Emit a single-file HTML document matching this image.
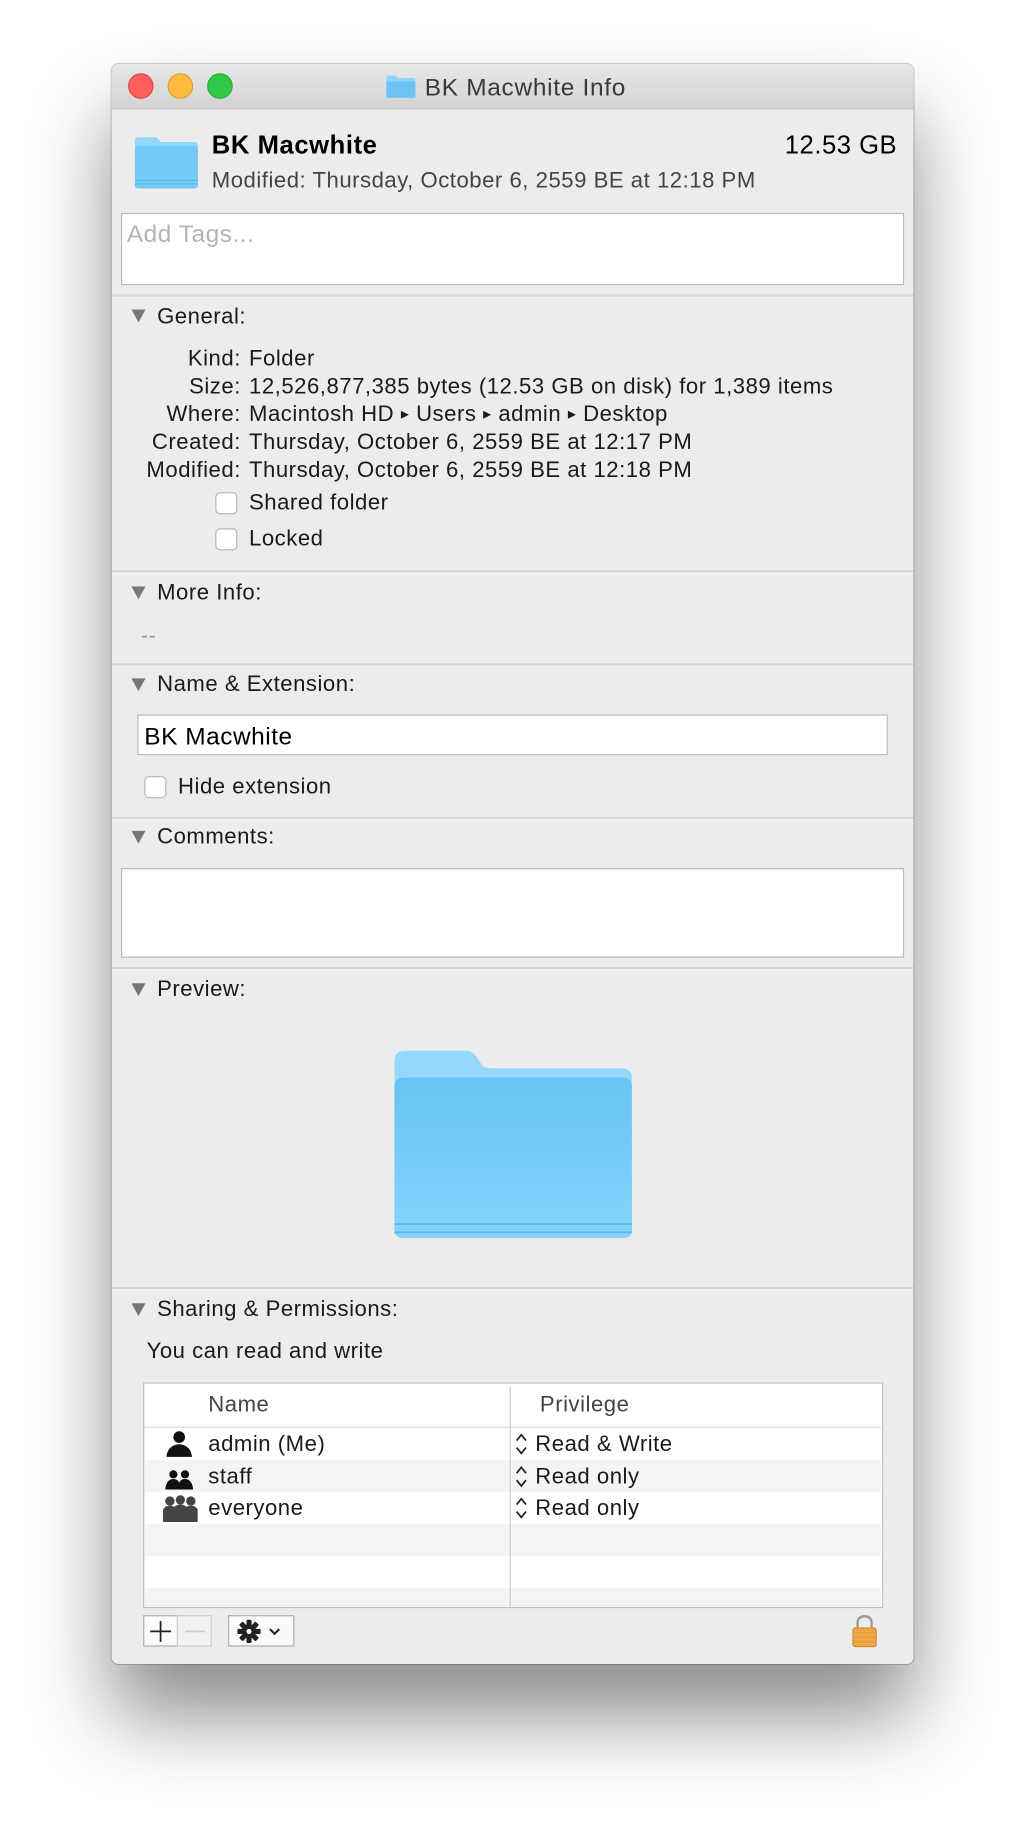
<!DOCTYPE html>
<html><head><meta charset="utf-8"><style>
html,body{margin:0;padding:0;background:#fff;width:1024px;height:1822px;overflow:hidden}
#s{position:absolute;left:0;top:0;width:880px;height:1566px;transform:scale(1.163636);transform-origin:0 0;font-family:"Liberation Sans",sans-serif;color:#1a1a1a;font-size:19px;letter-spacing:.45px}
.a{position:absolute;white-space:nowrap;line-height:1}
.win{position:absolute;left:96px;top:55px;width:689px;height:1375px;background:#ececec;border-radius:6px;box-shadow:0 45px 70px rgba(0,0,0,.45),0 0 0 1px rgba(0,0,0,.18)}
.tb{position:absolute;left:96px;top:55px;width:689px;height:38px;background:linear-gradient(#e8e8e8,#d3d3d3);border-radius:6px 6px 0 0;border-bottom:1px solid #b5b5b5}
.dot{position:absolute;width:22px;height:22px;border-radius:50%;top:63px}
.sep{position:absolute;left:96px;width:689px;height:2px;background:#d6d6d6;border-bottom:1px solid #f8f8f8}
.tri{position:absolute;width:0;height:0;border-left:6px solid transparent;border-right:6px solid transparent;border-top:11px solid #777}
.box{position:absolute;background:#fff;border:1px solid #b8b8b8;box-sizing:border-box}
.cb{position:absolute;width:19px;height:19px;background:#fff;border:1px solid #b5b5b5;border-radius:4px;box-sizing:border-box}
.r{text-align:right}
.row{position:absolute;left:124px;width:633px}
</style></head><body><div id="s">
<div class="win"></div>
<div class="tb"></div>
<div class="dot" style="left:110px;background:#fc605c;border:1px solid #de4a46;box-sizing:border-box"></div>
<div class="dot" style="left:144px;background:#fdbc40;border:1px solid #de9f32;box-sizing:border-box"></div>
<div class="dot" style="left:178px;background:#34c84a;border:1px solid #27aa37;box-sizing:border-box"></div>
<svg class="a" style="left:331px;top:64px" width="27" height="21" viewBox="0 0 27 21"><path d="M1 3 Q1 1 3 1 H9 L11 3 H24 Q26 3 26 5 V20 H1Z" fill="#8fd2fb"/><path d="M1 6 H26 V20 H1Z" fill="#6cc4f5"/></svg>
<div class="a" style="left:365px;top:65px;font-size:21px;letter-spacing:.6px;color:#3a3a3a">BK Macwhite Info</div>

<svg class="a" style="left:115px;top:117px" width="56" height="46" viewBox="0 0 56 46"><path d="M1 4 Q1 1 4 1 H18 Q21 1 23 5 H52 Q55 5 55 8 V44 H1Z" fill="#95d6fc"/><path d="M1 10 Q1 8 4 8 H52 Q55 8 55 11 V42 Q55 45 52 45 H4 Q1 45 1 42Z" fill="#74caf6"/><path d="M1 38 H55 M1 41 H55" stroke="#5fb6e6" stroke-width="1"/></svg>
<div class="a" style="left:182px;top:114px;font-size:22px;font-weight:bold;color:#000;letter-spacing:.5px">BK Macwhite</div>
<div class="a" style="left:600px;width:171px;top:114px;font-size:22px;text-align:right;color:#000">12.53 GB</div>
<div class="a" style="left:182px;top:146px;color:#444">Modified: Thursday, October 6, 2559 BE at 12:18 PM</div>

<div class="box" style="left:104px;top:183px;width:673px;height:62px"></div>
<div class="a" style="left:109px;top:191px;font-size:21px;color:#b4b4b4">Add Tags...</div>
<div class="sep" style="top:253px"></div>

<div class="tri" style="left:113px;top:266px"></div>
<div class="a" style="left:135px;top:263px">General:</div>
<div class="a r" style="left:100px;width:107px;top:299px">Kind:</div><div class="a" style="left:214px;top:299px">Folder</div>
<div class="a r" style="left:100px;width:107px;top:323px">Size:</div><div class="a" style="left:214px;top:323px">12,526,877,385 bytes (12.53 GB on disk) for 1,389 items</div>
<div class="a r" style="left:100px;width:107px;top:347px">Where:</div><div class="a" style="left:214px;top:347px">Macintosh HD <span style="font-size:9px;vertical-align:3px">&#9654;</span> Users <span style="font-size:9px;vertical-align:3px">&#9654;</span> admin <span style="font-size:9px;vertical-align:3px">&#9654;</span> Desktop</div>
<div class="a r" style="left:100px;width:107px;top:371px">Created:</div><div class="a" style="left:214px;top:371px">Thursday, October 6, 2559 BE at 12:17 PM</div>
<div class="a r" style="left:100px;width:107px;top:395px">Modified:</div><div class="a" style="left:214px;top:395px">Thursday, October 6, 2559 BE at 12:18 PM</div>
<div class="cb" style="left:185px;top:423px"></div><div class="a" style="left:214px;top:423px">Shared folder</div>
<div class="cb" style="left:185px;top:454px"></div><div class="a" style="left:214px;top:454px">Locked</div>
<div class="sep" style="top:490px"></div>

<div class="tri" style="left:113px;top:504px"></div>
<div class="a" style="left:135px;top:500px">More Info:</div>
<div class="a" style="left:121px;top:537px;color:#999">--</div>
<div class="sep" style="top:570px"></div>

<div class="tri" style="left:113px;top:583px"></div>
<div class="a" style="left:135px;top:579px">Name &amp; Extension:</div>
<div class="box" style="left:118px;top:614px;width:645px;height:35px"></div>
<div class="a" style="left:124px;top:623px;font-size:21px;color:#000">BK Macwhite</div>
<div class="cb" style="left:124px;top:667px"></div><div class="a" style="left:153px;top:667px">Hide extension</div>
<div class="sep" style="top:702px"></div>

<div class="tri" style="left:113px;top:714px"></div>
<div class="a" style="left:135px;top:710px">Comments:</div>
<div class="box" style="left:104px;top:746px;width:673px;height:77px"></div>
<div class="sep" style="top:831px"></div>

<div class="tri" style="left:113px;top:845px"></div>
<div class="a" style="left:135px;top:841px">Preview:</div>
<svg class="a" style="left:336px;top:900px" width="212" height="168" viewBox="0 0 212 168"><defs><linearGradient id="g" x1="0" y1="0" x2="0" y2="1"><stop offset="0" stop-color="#68c4f4"/><stop offset="1" stop-color="#84d4fb"/></linearGradient></defs><path d="M3 12 Q3 3 12 3 H64 Q70 3 74 9 L78 15 Q80 18 86 18 H198 Q207 18 207 27 V160 H3Z" fill="#96d8fd"/><path d="M3 34 Q3 26 12 26 H199 Q207 26 207 34 V157 Q207 164 199 164 H11 Q3 164 3 157Z" fill="url(#g)"/><path d="M3 152 H207 M3 159 H207" stroke="#5fb6e8" stroke-width="1.5"/><path d="M3 146 H207" stroke="#7ccbf3" stroke-width="1"/></svg>
<div class="sep" style="top:1106px"></div>

<div class="tri" style="left:113px;top:1120px"></div>
<div class="a" style="left:135px;top:1116px">Sharing &amp; Permissions:</div>
<div class="a" style="left:126px;top:1152px">You can read and write</div>

<div class="box" style="left:123px;top:1188px;width:636px;height:194px;border-color:#bdbdbd"></div>
<div class="row" style="top:1226px;height:1px;background:#d8d8d8"></div>
<div class="row" style="top:1255px;height:27px;background:#f4f4f4"></div>
<div class="row" style="top:1310px;height:27px;background:#f4f4f4"></div>
<div class="row" style="top:1365px;height:16px;background:#f4f4f4"></div>
<div class="a" style="left:438px;top:1192px;width:1px;height:189px;background:#c8c8c8"></div>
<div class="a" style="left:179px;top:1198px;color:#444">Name</div>
<div class="a" style="left:464px;top:1198px;color:#444">Privilege</div>

<svg class="a" style="left:141px;top:1229px" width="26" height="24" viewBox="0 0 26 24"><circle cx="13" cy="6" r="5" fill="#111"/><path d="M2 23 Q3 13 13 12 Q23 13 24 23Z" fill="#111"/></svg>
<svg class="a" style="left:140px;top:1259px" width="28" height="22" viewBox="0 0 28 22"><circle cx="9" cy="8" r="3.5" fill="#111"/><circle cx="19" cy="8" r="3.5" fill="#111"/><path d="M2 21 Q3 12 9 12 Q15 12 15 21Z M13 21 Q13 12 19 12 Q25 12 26 21Z" fill="#111"/></svg>
<svg class="a" style="left:140px;top:1284px" width="30" height="24" viewBox="0 0 30 24"><g fill="#444"><circle cx="6" cy="6" r="4"/><circle cx="15" cy="5" r="4"/><circle cx="24" cy="6" r="4"/><path d="M0 24 V14 Q1 10 6 10 Q11 10 12 14 V24Z M9 24 V13 Q10 9 15 9 Q20 9 21 13 V24Z M18 24 V14 Q19 10 24 10 Q29 10 30 14 V24Z"/></g></svg>
<div class="a" style="left:179px;top:1232px">admin (Me)</div>
<div class="a" style="left:179px;top:1260px">staff</div>
<div class="a" style="left:179px;top:1287px">everyone</div>
<svg class="a" style="left:442px;top:1231px" width="12" height="20" viewBox="0 0 12 20"><path d="M2 7 L6 2 L10 7 M2 13 L6 18 L10 13" fill="none" stroke="#222" stroke-width="1.5"/></svg>
<svg class="a" style="left:442px;top:1259px" width="12" height="20" viewBox="0 0 12 20"><path d="M2 7 L6 2 L10 7 M2 13 L6 18 L10 13" fill="none" stroke="#222" stroke-width="1.5"/></svg>
<svg class="a" style="left:442px;top:1286px" width="12" height="20" viewBox="0 0 12 20"><path d="M2 7 L6 2 L10 7 M2 13 L6 18 L10 13" fill="none" stroke="#222" stroke-width="1.5"/></svg>
<div class="a" style="left:460px;top:1232px">Read &amp; Write</div>
<div class="a" style="left:460px;top:1260px">Read only</div>
<div class="a" style="left:460px;top:1287px">Read only</div>

<div class="box" style="left:123px;top:1388px;width:30px;height:27px;border-color:#aaa;background:#fafafa"></div>
<div class="box" style="left:152px;top:1388px;width:30px;height:27px;border-color:#ccc;background:#f2f2f2"></div>
<svg class="a" style="left:123px;top:1388px" width="60" height="27"><path d="M15 5 V23 M6 14 H24" stroke="#222" stroke-width="1.5"/><path d="M36 14 H53" stroke="#ccc" stroke-width="1.5"/></svg>
<div class="box" style="left:196px;top:1388px;width:57px;height:27px;border-color:#aaa;background:#fafafa"></div>
<svg class="a" style="left:203px;top:1391px" width="46" height="22" viewBox="0 0 46 22"><g fill="#222" transform="translate(11 11)"><circle r="6"/><g id="t"><rect x="-2.2" y="-10" width="4.4" height="20" rx="1"/></g><use href="#t" transform="rotate(45)"/><use href="#t" transform="rotate(90)"/><use href="#t" transform="rotate(135)"/></g><circle cx="11" cy="11" r="2.2" fill="#fafafa"/><path d="M29 9 L33 13 L37 9" fill="none" stroke="#222" stroke-width="1.8"/></svg>
<svg class="a" style="left:730px;top:1387px" width="26" height="30" viewBox="0 0 26 30"><path d="M7 13 V8 Q7 2 13 2 Q19 2 19 8 V13" fill="none" stroke="#9a9a9a" stroke-width="2"/><rect x="3" y="12" width="20" height="16" rx="2" fill="#f0a846" stroke="#c98a2a"/><path d="M3 16 H23 M3 20 H23 M3 24 H23" stroke="#e39a3b" stroke-width="1"/></svg>
</div></body></html>
